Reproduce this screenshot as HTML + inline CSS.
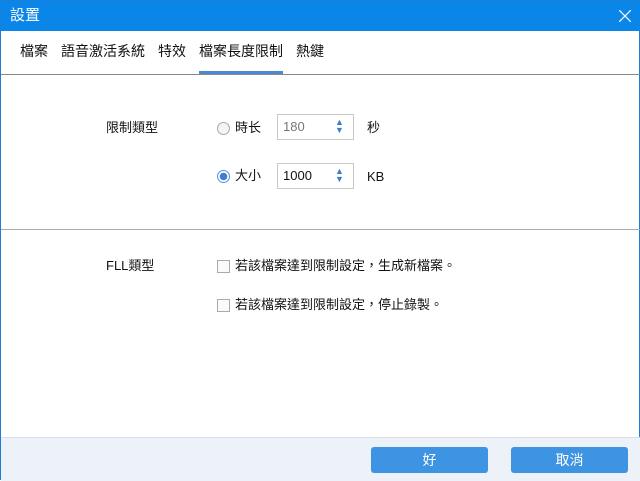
<!DOCTYPE html>
<html><head><meta charset="utf-8"><style>
*{margin:0;padding:0;box-sizing:border-box}
body{width:640px;height:480px;overflow:hidden;background:#fff;font-family:"Liberation Sans","Noto Sans CJK TC",sans-serif;font-size:13px;line-height:16px;color:#111;position:relative;border:1px solid #1a7fd8}
.a{position:absolute}
.title{left:0;top:0;width:640px;height:30px;background:#0a86e9;color:#fff;font-size:15px;line-height:30px;padding-left:9px}
.tab{top:42px;font-size:14px}
.radio{width:13px;height:13px;border:1px solid #aaa;border-radius:50%;background:#f4f4f4}
.spin{width:77px;height:26px;border:1px solid #c8c8c8;padding-left:5px;line-height:24px;font-size:13px}
.cb{width:13px;height:13px;border:1px solid #aaa;background:#fafafa}
.btn{top:446px;width:117px;height:26px;background:#3d94e2;border-radius:3px;color:#fff;text-align:center;line-height:26px;font-size:14px}
</style></head><body>
<div class="a title">設置<svg class="a" style="right:10px;top:9px" width="12" height="12"><path d="M0 0L12 12M12 0L0 12" stroke="#fff" stroke-width="1.2"/></svg></div>
<div class="a tab" style="left:19px">檔案</div>
<div class="a tab" style="left:60px">語音激活系統</div>
<div class="a tab" style="left:157px">特效</div>
<div class="a tab" style="left:198px">檔案長度限制</div>
<div class="a tab" style="left:295px">熱鍵</div>
<div class="a" style="left:0;top:73px;width:640px;height:1px;background:#888"></div>
<div class="a" style="left:198px;top:70px;width:84px;height:3px;background:#4a8ad0"></div>
<div class="a" style="left:105px;top:119px">限制類型</div>
<div class="a radio" style="left:216px;top:121px"></div>
<div class="a" style="left:234px;top:119px">時长</div>
<div class="a spin" style="left:276px;top:113px;color:#777">180</div>
<div class="a" style="left:334px;top:117px;color:#3b7fc8;font-size:9px;line-height:8px">▲<br>▼</div>
<div class="a" style="left:366px;top:119px">秒</div>
<div class="a radio" style="left:216px;top:169px;border-color:#5b8ed6;background:radial-gradient(circle,#3d7fd6 3.5px,#fff 4px)"></div>
<div class="a" style="left:234px;top:167px">大小</div>
<div class="a spin" style="left:276px;top:162px">1000</div>
<div class="a" style="left:334px;top:166px;color:#3b7fc8;font-size:9px;line-height:8px">▲<br>▼</div>
<div class="a" style="left:366px;top:168px">KB</div>
<div class="a" style="left:0;top:228px;width:640px;height:1px;background:#aaa"></div>
<div class="a" style="left:105px;top:257px">FLL類型</div>
<div class="a cb" style="left:216px;top:259px"></div>
<div class="a" style="left:234px;top:257px">若該檔案達到限制設定，生成新檔案。</div>
<div class="a cb" style="left:216px;top:298px"></div>
<div class="a" style="left:234px;top:296px">若該檔案達到限制設定，停止錄製。</div>
<div class="a" style="left:0;top:436px;width:640px;height:44px;background:#edf1f8;border-top:1px solid #d8dde6"></div>
<div class="a btn" style="left:370px">好</div>
<div class="a btn" style="left:510px">取消</div>
</body></html>
